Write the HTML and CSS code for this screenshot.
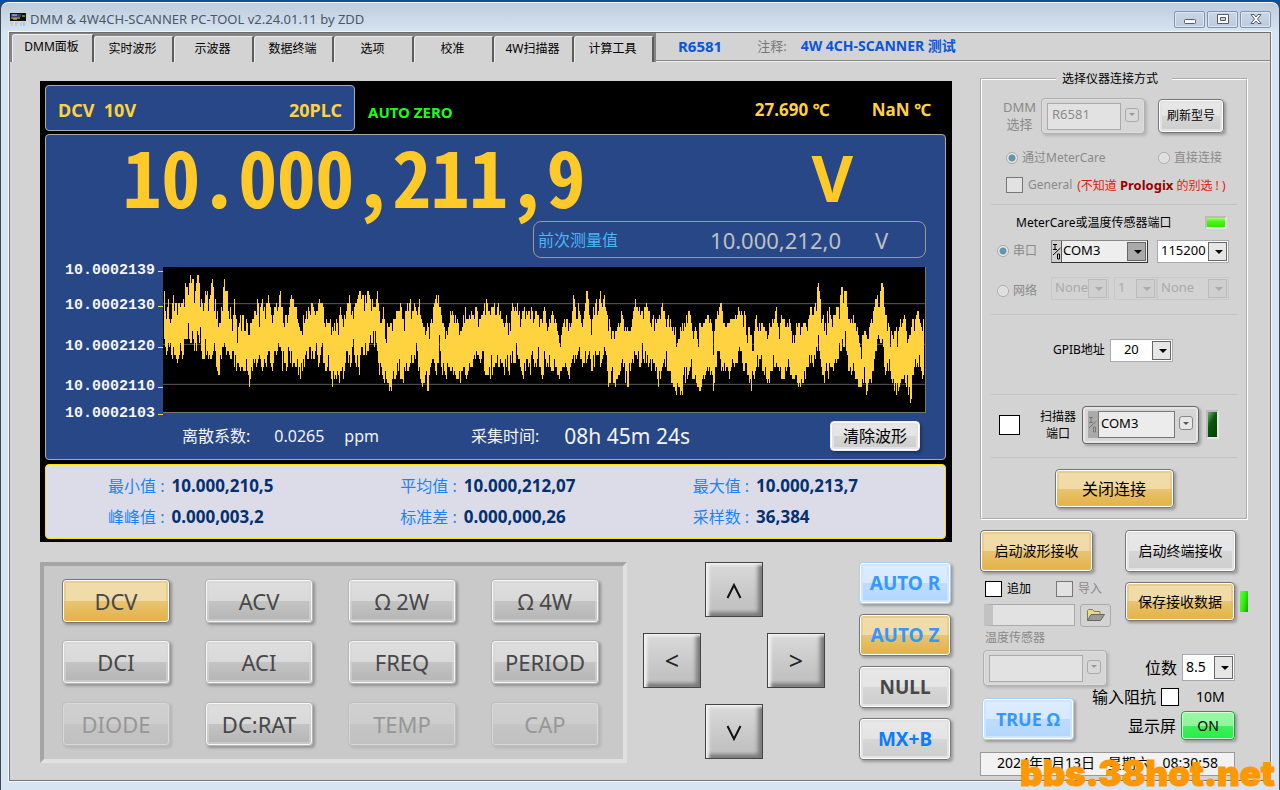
FILE: index.html
```html
<!DOCTYPE html>
<html lang="zh-CN">
  <head>
    <meta charset="UTF-8" />
    <meta name="viewport" content="width=device-width, initial-scale=1.0" />
    <title>DMM &amp; 4W4CH-SCANNER PC-TOOL</title>
    <link rel="stylesheet" href="styles.css">
  </head>
  <body>
    <div class="window">
      <header class="title-bar">
        <svg class="app-icon" width="16" height="13" viewBox="0 0 16 13" aria-hidden="true">
          <rect width="16" height="8" fill="#111" />
          <rect x="1" y="1" width="10" height="3" fill="#274787" />
          <path d="M1 5h9M12 3h3M3 6h4" stroke="#ffd23f" />
          <path d="M2 2h5" stroke="#cdd6ea" />
          <path d="M0 10h3M5 10h3M10 10h2M1 12h2M5 12h2M10 12h2" stroke="#b9b9b9" />
          <path d="M13 10h2" stroke="#f08a6a" />
          <path d="M13 12h2" stroke="#3fc8f0" />
        </svg>
        <h1 class="title">DMM &amp; 4W4CH-SCANNER PC-TOOL v2.24.01.11 by ZDD</h1>
        <div class="window-buttons">
          <button type="button" aria-label="Minimize">
            <svg width="12" height="12" viewBox="0 0 12 12"><rect x="0.5" y="6.5" width="11" height="4" rx="1" fill="#fff" stroke="#555b6b" /></svg>
          </button>
          <button type="button" aria-label="Maximize">
            <svg width="12" height="12" viewBox="0 0 12 12"><path d="M.5 1.5h11v9H.5z" fill="#fff" stroke="#555b6b" /><path d="M3.5 4.5h5v3h-5z" fill="#c6d3e3" stroke="#555b6b" /></svg>
          </button>
          <button type="button" aria-label="Close">
            <svg width="12" height="12" viewBox="0 0 12 12"><path d="M1 1.5h3L6 4l2-2.500h3L7.500 6l3.500 4.500H8L6 8l-2 2.500H1L4.500 6z" fill="#fff" stroke="#555b6b" /></svg>
          </button>
        </div>
      </header>

      <div class="client">
        <nav class="tab-bar">
          <div class="tabs">
            <button type="button" class="tab active">DMM面板</button>
            <button type="button" class="tab">实时波形</button>
            <button type="button" class="tab">示波器</button>
            <button type="button" class="tab">数据终端</button>
            <button type="button" class="tab">选项</button>
            <button type="button" class="tab">校准</button>
            <button type="button" class="tab">4W扫描器</button>
            <button type="button" class="tab">计算工具</button>
          </div>
          <div class="note">
            <span class="note-model">R6581</span>
            <span class="note-label">注释:</span>
            <span class="note-text">4W 4CH-SCANNER 测试</span>
          </div>
        </nav>

        <main class="content">
          <section class="left">
            <div class="screen">
              <div class="screen-top">
                <div class="range-box">
                  <span>DCV&nbsp; 10V</span>
                  <span>20PLC</span>
                </div>
                <span class="auto-zero">AUTO ZERO</span>
                <span class="temp">27.690 ℃</span>
                <span class="temp second">NaN ℃</span>
              </div>

              <div class="reading">
                <div class="main-value">
                  <span class="digits">10.000,211,9</span>
                  <span class="unit">V</span>
                </div>
                <div class="previous">
                  <span class="previous-label">前次测量值</span>
                  <span class="previous-value">10.000,212,0</span>
                  <span class="previous-unit">V</span>
                </div>
                <div class="chart">
                  <div class="axis">
                    <span>10.0002139</span>
                    <span>10.0002130</span>
                    <span>10.0002120</span>
                    <span>10.0002110</span>
                    <span>10.0002103</span>
                  </div>
                  <svg class="plot" viewBox="0 0 2289 435" preserveAspectRatio="none" role="img" aria-label="波形">
                    <path class="grid-line" d="M0 110H2289M0 232H2289M0 352H2289" />
                    <path id="trace" class="trace" />
                  </svg>
                </div>
                <div class="reading-foot">
                  <span>离散系数:</span>
                  <span class="spread">0.0265</span>
                  <span class="ppm">ppm</span>
                  <span class="time-label">采集时间:</span>
                  <span class="time">08h 45m 24s</span>
                  <button type="button" class="btn clear">清除波形</button>
                </div>
              </div>

              <dl class="stats">
                <div><dt>最小值 :</dt><dd>10.000,210,5</dd></div>
                <div><dt>平均值 :</dt><dd>10.000,212,07</dd></div>
                <div><dt>最大值 :</dt><dd>10.000,213,7</dd></div>
                <div><dt>峰峰值 :</dt><dd>0.000,003,2</dd></div>
                <div><dt>标准差 :</dt><dd>0.000,000,26</dd></div>
                <div><dt>采样数 :</dt><dd>36,384</dd></div>
              </dl>
            </div>

            <div class="controls">
              <div class="keypad">
                <button type="button" class="btn key gold">DCV</button>
                <button type="button" class="btn key">ACV</button>
                <button type="button" class="btn key">Ω 2W</button>
                <button type="button" class="btn key">Ω 4W</button>
                <button type="button" class="btn key">DCI</button>
                <button type="button" class="btn key">ACI</button>
                <button type="button" class="btn key">FREQ</button>
                <button type="button" class="btn key">PERIOD</button>
                <button type="button" class="btn key" disabled>DIODE</button>
                <button type="button" class="btn key">DC:RAT</button>
                <button type="button" class="btn key" disabled>TEMP</button>
                <button type="button" class="btn key" disabled>CAP</button>
              </div>
              <div class="arrows">
                <button type="button" class="arrow up" aria-label="Up"><svg width="16" height="16" viewBox="0 0 16 16"><path d="M1.500 15L8 2l6.500 13" /></svg></button>
                <button type="button" class="arrow left-key">&lt;</button>
                <button type="button" class="arrow right-key">&gt;</button>
                <button type="button" class="arrow down" aria-label="Down"><svg width="16" height="16" viewBox="0 0 16 16"><path d="M1.500 1L8 14l6.500-13" /></svg></button>
              </div>
              <div class="modes">
                <button type="button" class="btn mode blue">AUTO R</button>
                <button type="button" class="btn mode gold">AUTO Z</button>
                <button type="button" class="btn mode null">NULL</button>
                <button type="button" class="btn mode math">MX+B</button>
              </div>
            </div>
          </section>

          <aside class="side">
            <fieldset class="connection">
              <legend>选择仪器连接方式</legend>

              <div class="row model-row">
                <label class="two-line dim" for="model">DMM<br>选择</label>
                <div class="case off">
                  <select id="model" disabled><option>R6581</option></select>
                  <span class="case-arrow"></span>
                </div>
                <button type="button" class="btn refresh">刷新型号</button>
              </div>
              <div class="row radio-row">
                <label class="dim"><input type="radio" name="link" checked disabled>通过MeterCare</label>
                <label class="dim"><input type="radio" name="link" disabled>直接连接</label>
              </div>
              <div class="row general-row">
                <label class="dim"><input type="checkbox" disabled>General</label>
                <span class="warning">(不知道 <b>Prologix</b> 的别选 ! )</span>
              </div>

              <hr>
              <div class="row port-title">
                <span>MeterCare或温度传感器端口</span>
                <span class="led on"></span>
              </div>
              <div class="row serial-row">
                <label class="dim"><input type="radio" name="bus" checked disabled>串口</label>
                <div class="drop visa">
                  <svg class="io" width="9" height="17" viewBox="0 0 9 17" aria-hidden="true"><path d="M1 1.500h4M3 1.500v5M1 6.500h4M8.500 5L1 12M5.500 11h2v5h-2z" /></svg>
                  <select aria-label="串口"><option>COM3</option></select>
                </div>
                <div class="drop baud"><select aria-label="波特率"><option>115200</option></select></div>
              </div>
              <div class="row net-row">
                <label class="dim"><input type="radio" name="bus" disabled>网络</label>
                <div class="drop off host"><select aria-label="主机" disabled><option>None</option></select></div>
                <div class="drop off index"><select aria-label="序号" disabled><option>1</option></select></div>
                <div class="drop off device"><select aria-label="设备" disabled><option>None</option></select></div>
              </div>

              <hr>
              <div class="row gpib-row">
                <label for="gpib">GPIB地址</label>
                <div class="drop gpib"><select id="gpib"><option>20</option></select></div>
              </div>

              <hr>
              <div class="row scanner-row">
                <input type="checkbox" class="big" aria-label="启用扫描器">
                <label class="two-line" for="scanner">扫描器<br>端口</label>
                <div class="case">
                  <span class="io-cell">
                    <svg class="io" width="9" height="17" viewBox="0 0 9 17" aria-hidden="true"><path d="M1 1.500h4M3 1.500v5M1 6.500h4M8.500 5L1 12M5.500 11h2v5h-2z" /></svg>
                  </span>
                  <select id="scanner"><option>COM3</option></select>
                  <span class="case-arrow"></span>
                </div>
                <span class="led dark"></span>
              </div>

              <hr>
              <button type="button" class="btn gold disconnect">关闭连接</button>
            </fieldset>

            <div class="actions">
              <div class="actions-left">
                <button type="button" class="btn gold start">启动波形接收</button>
                <div class="row checks">
                  <label><input type="checkbox">追加</label>
                  <label class="dim"><input type="checkbox" disabled>导入</label>
                </div>
                <div class="row file-row">
                  <input type="text" class="path" aria-label="文件路径" disabled>
                  <button type="button" class="browse" aria-label="浏览" disabled>
                    <svg width="20" height="14" viewBox="0 0 20 14">
                      <path d="M1.500 12.500V2.500l1-1h4l1.500 2h6v3" fill="#e6dc8c" stroke="#83804d" />
                      <path d="M1.500 12.500L5 6.500h13.500l-4 6z" fill="#9a9a9a" stroke="#666" />
                    </svg>
                  </button>
                </div>
                <label class="dim sensor-label" for="sensor">温度传感器</label>
                <div class="case off sensor">
                  <select id="sensor" disabled><option></option></select>
                  <span class="case-arrow"></span>
                </div>
                <button type="button" class="btn blue true-ohm">TRUE Ω</button>
              </div>
              <div class="actions-right">
                <button type="button" class="btn start">启动终端接收</button>
                <div class="row save-row">
                  <button type="button" class="btn gold save">保存接收数据</button>
                  <span class="led slim"></span>
                </div>
                <div class="row setting">
                  <label for="digits">位数</label>
                  <div class="drop digits-drop"><select id="digits"><option>8.5</option></select></div>
                </div>
                <div class="row setting">
                  <label for="impedance">输入阻抗</label>
                  <input type="checkbox" id="impedance">
                  <span class="impedance-value">10M</span>
                </div>
                <div class="row setting">
                  <span>显示屏</span>
                  <button type="button" class="btn green">ON</button>
                </div>
              </div>
            </div>

            <div class="clock">
              <span>2024年7月13日</span>
              <span>星期六</span>
              <span>08:30:58</span>
            </div>
          </aside>
        </main>
      </div>
      <div class="watermark">bbs.38hot.net</div>
    </div>

    <script src="script.js"></script>
  </body>
</html>
```

FILE: styles.css
```css
* {
  box-sizing: border-box;
}
body {
  margin: 0;
  padding-top: 1px;
  background-color: #0b50a0;
  font-family: "Noto Sans", "Noto Sans CJK SC", sans-serif;
  font-size: 12px;
  line-height: 16px;
  color: #000;
}
button,
input,
select {
  margin: 0;
  font: inherit;
  color: inherit;
}
.window {
  position: relative;
  min-height: calc(100vh - 1px);
  padding: 0 8px 7px;
  border: 1px solid #3b4656;
  border-bottom: none;
  border-radius: 8px 8px 0 0;
  background: linear-gradient(#bccbdb, #d7e4f2 30px);
  box-shadow: inset 0 1px #f3f8fc;
}

/* title bar */
.title-bar {
  display: flex;
  align-items: center;
  height: 30px;
  padding: 4px 0 0 1px;
}
.app-icon {
  margin-right: 4px;
}
.title {
  flex: 1;
  margin: 0;
  font-size: 13px;
  font-weight: normal;
  color: #4b5866;
}
.window-buttons {
  display: flex;
  gap: 2px;
}
.window-buttons button {
  display: flex;
  align-items: center;
  justify-content: center;
  width: 31px;
  height: 17px;
  padding: 0;
  border: 1px solid #8293ab;
  border-radius: 2px;
  background: linear-gradient(#c9d6e5, #bccbdc);
  box-shadow: inset 0 0 0 1px #dfe8f2;
}

.client {
  border: 1px solid #777;
  border-top-color: #6c6c6c;
  background-color: #d3d3d3;
  box-shadow: 0 0 0 1px #f4f7fa;
}

/* tabs */
.tab-bar {
  display: flex;
  height: 29px;
  background-color: #858585;
}
.tabs {
  display: flex;
  align-items: flex-end;
  padding-left: 2px;
}
.tab {
  width: 80px;
  height: 26px;
  padding: 0 2px 2px 0;
  border: 1px solid #eee;
  border-right: 2px solid #5c5c5c;
  border-bottom: none;
  border-radius: 3px 0 0 0;
  background-color: #d3d3d3;
}
.tab.active {
  width: 82px;
  height: 28px;
  padding-bottom: 4px;
}
.note {
  display: flex;
  flex: 1;
  align-items: center;
  margin-left: 2px;
  padding: 0 0 2px 22px;
  border-bottom: 1px solid #f0f0f0;
  background-color: #d3d3d3;
  box-shadow: inset 0 -1px #858585;
  font-size: 14px;
  font-weight: bold;
  color: #0a55dc;
}
.note-model {
  margin-right: 35px;
  font-size: 15px;
}
.note-label {
  margin-right: 14px;
  font-size: 13px;
  font-weight: normal;
  color: #777;
}

.content {
  display: flex;
  gap: 28px;
  padding: 19px 22px 4px 30px;
}
.left {
  flex: 1;
  min-width: 0;
}
.side {
  width: 268px;
}

/* meter screen */
.screen {
  padding: 4px 6px 3px 5px;
  background-color: #000;
}
.screen-top {
  display: flex;
  align-items: center;
  height: 46px;
  margin-bottom: 3px;
  font-size: 17px;
  font-weight: bold;
  color: #ffd23f;
}
.range-box {
  display: flex;
  align-items: center;
  justify-content: space-between;
  width: 310px;
  height: 46px;
  padding: 4px 12px 0;
  border: 1px solid #aaa;
  border-radius: 4px;
  background-color: #274787;
  font-size: 18px;
}
.auto-zero {
  flex: 1;
  padding: 7px 0 0 13px;
  font-size: 15px;
  color: #1aff1a;
}
.temp {
  padding-top: 4px;
}
.temp.second {
  margin: 0 15px 0 42px;
}
.reading {
  padding: 0 19px;
  border: 1px solid #aaa;
  border-radius: 4px;
  background-color: #274787;
  color: #f4f4f4;
}
.main-value {
  display: flex;
  justify-content: space-between;
  height: 86px;
  padding: 0 73px 0 58px;
  font-weight: bold;
  color: #ffca28;
}
.digits {
  font-family: "Noto Sans CJK SC", sans-serif;
  font-size: 77px;
  font-feature-settings: "hwid";
  line-height: 79px;
}
.unit {
  font-size: 64px;
  line-height: 86px;
}
.previous {
  display: flex;
  align-items: center;
  width: 393px;
  height: 37px;
  margin-left: auto;
  padding-left: 4px;
  border: 1px solid #9a9a9a;
  border-radius: 8px;
  font-size: 22px;
  color: #bfc0c4;
}
.previous-label {
  flex: 1;
  font-size: 16px;
  color: #4db4f5;
}
.previous-unit {
  width: 50px;
  margin-left: 34px;
}
.chart {
  display: flex;
  margin-top: 9px;
}
.axis {
  display: grid;
  grid-template-rows: 35px 41px 40px 27px 18px;
  align-items: start;
  width: 98px;
  margin: -5px 0 -10px;
  font-family: "Liberation Mono", monospace;
  font-size: 15px;
  font-weight: bold;
  line-height: 18px;
}
.axis span {
  display: flex;
  align-items: center;
}
.axis span::after {
  content: "";
  width: 5px;
  height: 1px;
  margin-left: 3px;
  background-color: #ffd23f;
}
.plot {
  flex: 1;
  min-width: 0;
  height: 146px;
  border-right: 1px solid #777;
  border-bottom: 1px solid #777;
  background-color: #000;
}
.grid-line {
  stroke: #5c5c5c;
  stroke-width: 3;
}
.trace {
  fill: #ffd23f;
  shape-rendering: crispEdges;
}
.reading-foot {
  display: flex;
  align-items: center;
  height: 46px;
  padding: 0 6px 0 117px;
  font-size: 16px;
}
.spread {
  margin-left: 24px;
}
.ppm {
  margin-left: 20px;
}
.time-label {
  margin-left: 92px;
}
.time {
  margin-left: 25px;
  font-size: 21px;
}
.stats {
  display: grid;
  grid-template-columns: repeat(3, 1fr);
  align-items: center;
  height: 75px;
  margin: 4px 0 0;
  padding: 5px 0 5px 22px;
  border: 1px solid #ffe100;
  border-radius: 4px;
  background-color: #dcdce8;
  font-size: 16px;
}
.stats div {
  display: flex;
  gap: 7px;
  padding-left: 40px;
}
.stats dt {
  color: #1a84f5;
}
.stats dd {
  margin: 0;
  font-size: 17px;
  font-weight: bold;
  color: #04306f;
}

/* buttons */
.btn {
  padding: 0;
  border: 1px solid #777;
  border-radius: 4px;
  background: linear-gradient(#e8e8e8, #e4e4e4 50%, #d6d6d6 50%, #cdcdcd);
  box-shadow: inset 0 0 0 1px #fdfdfd, inset 0 0 0 3px #e2e2e2, 2px 2px 3px rgba(0, 0, 0, 0.28);
  white-space: nowrap;
}
.btn.gold {
  background: linear-gradient(#f0dbaa, #f0dba8 50%, #e8c473 50%, #e4b142);
  box-shadow: inset 0 0 0 1px #fff, inset 0 0 0 3px rgba(226, 186, 98, 0.4), 2px 2px 3px rgba(0, 0, 0, 0.28);
}
.btn.blue {
  border-color: #a9cffb;
  background: linear-gradient(#deedff, #d8e9ff 50%, #bfdcff 50%, #b2d6ff);
  box-shadow: inset 0 0 0 1px #fff, inset 0 0 0 3px #cfe4ff, 2px 2px 3px rgba(0, 0, 0, 0.28);
  color: #3498ff;
}
.btn.green {
  width: 54px;
  height: 29px;
  border-color: #0cad3a;
  background: linear-gradient(#9af7a4, #8ff59a 50%, #3ff05a 50%, #25ee48);
  box-shadow: inset 0 0 0 1px #d6ffdc, 2px 2px 3px rgba(0, 0, 0, 0.28);
  font-size: 14px;
}
.clear {
  width: 90px;
  height: 30px;
  margin-left: auto;
  border-color: #eee;
  font-size: 16px;
  color: #000;
}

.controls {
  display: flex;
  align-items: flex-start;
  margin-top: 20px;
}
.keypad {
  display: grid;
  grid-template-columns: repeat(4, 108px);
  gap: 17px 35px;
  height: 201px;
  padding: 13px 24px 13px 18px;
  border: 4px solid;
  border-color: #a5a5a5 #e0e0e0 #e0e0e0 #a5a5a5;
  background-color: #c9c9c9;
}
.key {
  height: 44px;
  border-color: #b5b5b5;
  background: linear-gradient(#dedede, #d9d9d9 50%, #c4c4c4 50%, #b4b4b4);
  box-shadow: inset 0 0 0 1px #f8f8f8, inset 0 0 0 3px rgba(214, 214, 214, 0.6), 2px 2px 3px rgba(0, 0, 0, 0.28);
  font-size: 22px;
  line-height: 30px;
  color: #484848;
}
.key.gold {
  border-color: #777;
}
.key:disabled {
  border-color: #bdbdbd;
  background: linear-gradient(#cfcfcf, #cdcdcd 50%, #c5c5c5 50%, #c0c0c0);
  box-shadow: inset 0 0 0 1px #d9d9d9, 2px 2px 3px rgba(0, 0, 0, 0.1);
  color: #979797;
}
.arrows {
  display: grid;
  grid-template-columns: repeat(3, 58px);
  grid-template-rows: repeat(3, 55px);
  gap: 16px 4px;
  margin: 0 auto 0 16px;
}
.arrow {
  padding: 0;
  border: 1px solid #444;
  background: linear-gradient(#dadada, #c2c2c2 80%, #cfcfcf);
  box-shadow: inset 3px 2px 3px #f2f2f2, inset -4px -4px 4px #777;
  font-size: 25px;
  line-height: 25px;
  color: #222;
}
.arrow path {
  fill: none;
  stroke: #111;
  stroke-width: 2;
}
.arrow.up {
  grid-area: 1 / 2;
}
.left-key {
  grid-area: 2 / 1;
}
.right-key {
  grid-area: 2 / 3;
}
.arrow.down {
  grid-area: 3 / 2;
}
.modes {
  display: flex;
  flex-direction: column;
  gap: 10px;
  margin-right: 1px;
}
.mode {
  width: 92px;
  height: 42px;
  font-size: 19px;
  font-weight: bold;
}
.mode.gold {
  color: #3498ff;
}
.mode.null {
  color: #484848;
}
.mode.math {
  color: #0a7cff;
}

/* connection group */
.connection {
  min-width: 0;
  margin: -10px 0 0;
  padding: 10px 7px;
  border: 2px groove #fff;
}
.connection legend {
  margin: 0 auto;
  padding: 0 14px 0 6px;
}
.row {
  display: flex;
  align-items: center;
}
.row label {
  display: flex;
  align-items: center;
}
.dim {
  color: #8a8a8a;
}
.two-line {
  justify-content: center;
  text-align: center;
  line-height: 17px;
}
hr {
  height: 1px;
  margin: 0 2px;
  border: none;
  background-color: #c3c3c3;
}
.model-row {
  height: 38px;
  padding-left: 14px;
}
.model-row .two-line {
  width: 33px;
  font-size: 13px;
}
.refresh {
  width: 66px;
  height: 34px;
  margin-left: 13px;
}
.radio-row {
  justify-content: space-between;
  height: 46px;
  padding: 0 17px;
}
.general-row {
  gap: 5px;
  height: 8px;
  margin-bottom: 15px;
  padding-left: 17px;
}
.warning {
  color: #e01a0c;
  white-space: nowrap;
}
.warning b {
  font-size: 13px;
  color: #970000;
}
input[type="radio"] {
  appearance: none;
  width: 12px;
  height: 12px;
  margin-right: 4px;
  border: 1px solid #aaa;
  border-radius: 50%;
  background-color: #dedede;
  box-shadow: inset 0 0 0 1px #eee;
}
input[type="radio"]:checked {
  background: radial-gradient(#6495ad 3px, #dedede 4px);
}
input[type="checkbox"] {
  appearance: none;
  flex-shrink: 0;
  width: 17px;
  height: 16px;
  margin-right: 5px;
  border: 1px solid #000;
  background-color: #fff;
}
input[type="checkbox"]:disabled {
  border-color: #777;
  background-color: #e2e2e2;
}
input[type="checkbox"].big {
  width: 21px;
  height: 20px;
  margin-right: 18px;
}
.case {
  display: flex;
  align-items: center;
  width: 104px;
  height: 36px;
  margin-left: 5px;
  padding: 0 5px;
  border: 1px solid #666;
  border-radius: 4px;
  background-color: #d6d6d6;
  box-shadow: inset 0 0 0 2px #e6e6e6, 2px 2px 3px rgba(0, 0, 0, 0.25);
}
.case.off {
  border-color: #b0b0b0;
  box-shadow: inset 0 0 0 1px #dedede, 2px 2px 3px rgba(0, 0, 0, 0.15);
  color: #8a8a8a;
}
.case select {
  appearance: none;
  flex: 1;
  min-width: 0;
  height: 27px;
  padding: 0 4px 4px;
  border: 1px solid #777;
  border-radius: 0;
  background-color: #ececec;
  font-size: 13px;
}
.case.off select {
  border-color: #aaa;
  background-color: #e2e2e2;
  opacity: 1;
}
.case-arrow {
  display: flex;
  align-items: center;
  justify-content: center;
  width: 14px;
  height: 14px;
  margin: 0 0 3px 4px;
  border: 1px solid #888;
  border-radius: 3px;
  background-color: #e6e6e6;
}
.case-arrow::before,
.drop::after {
  content: "";
  border: 3px solid transparent;
  border-top-color: #555;
  border-bottom: none;
}
.case.off .case-arrow {
  border-color: #aaa;
  background-color: #d8d8d8;
}
.case.off .case-arrow::before {
  border-top-color: #999;
}
.io {
  flex-shrink: 0;
  fill: none;
  stroke: #000;
}
.io-cell {
  display: flex;
  align-items: center;
  width: 10px;
  height: 27px;
  background-color: #aaa;
}
.io-cell .io {
  stroke: #777;
}
.case .io-cell + select {
  padding-left: 2px;
}

/* drop-downs */
.drop {
  position: relative;
  display: flex;
  align-items: center;
  height: 23px;
  border: 1px solid #a9a9b2;
  background-color: #fff;
  font-size: 13px;
}
.drop select {
  appearance: none;
  width: 100%;
  height: 100%;
  padding: 0 18px 2px 3px;
  border: none;
  border-radius: 0;
  background: none;
}
.drop::before {
  content: "";
  position: absolute;
  top: 1px;
  right: 1px;
  bottom: 1px;
  width: 17px;
  border: 1px solid #666;
  background-color: #e6e6e6;
  pointer-events: none;
}
.drop::after {
  position: absolute;
  top: 9px;
  right: 5px;
  border-width: 4px 4px 0;
  border-top-color: #000;
  pointer-events: none;
}
.drop.off {
  border-color: #c8c8c8;
  background: none;
  color: #aaa;
}
.drop.off select {
  opacity: 1;
}
.drop.off::before {
  border-color: #bbb;
  background-color: #cfcfcf;
}
.drop.off::after {
  border-top-color: #aaa;
}
.led {
  width: 22px;
  height: 13px;
  border: 2px solid;
  border-color: #bbb #e6e6e6 #e6e6e6 #bbb;
}
.led.on {
  background: linear-gradient(#a0ff70, #48fa05 40%, #3fe000);
}
.led.dark {
  width: 13px;
  height: 29px;
  margin-left: 7px;
  background: linear-gradient(120deg, #6fae6f, #085a0b 40%, #043f06);
}
.led.slim {
  width: 8px;
  height: 21px;
  margin-left: 5px;
  border: none;
  background: linear-gradient(100deg, #5eff3c, #32ee0a 50%, #16a800);
}
.port-title {
  justify-content: space-between;
  height: 35px;
  padding: 0 12px 0 27px;
}
.serial-row,
.net-row {
  height: 22px;
  padding-left: 8px;
}
.net-row {
  margin: 15px 0;
}
.serial-row label,
.net-row label {
  width: 54px;
}
.net-row label {
  padding-top: 6px;
}
.visa {
  width: 97px;
  border: 1px solid;
  border-color: #888 #333 #333 #888;
  background-color: #d0d0d0;
}
.visa select {
  padding-left: 1px;
  border-left: 1px solid #555;
  background-color: #eee;
}
.visa::before {
  background-color: #aaa;
}
.baud {
  width: 72px;
  margin-left: 9px;
}
.host {
  width: 58px;
}
.index {
  width: 43px;
  margin-left: 5px;
}
.device {
  width: 72px;
}
.gpib-row {
  gap: 5px;
  height: 79px;
  padding: 0 0 9px 64px;
}
.gpib {
  width: 63px;
}
.gpib select {
  padding-left: 13px;
}
.scanner-row {
  height: 62px;
  padding: 0 0 3px 10px;
}
.scanner-row .two-line {
  width: 40px;
}
.scanner-row .case {
  width: 117px;
  height: 38px;
  margin-left: 4px;
}
.disconnect {
  display: block;
  width: 119px;
  height: 39px;
  margin: 11px auto 0;
  font-size: 16px;
}

/* lower right */
.actions {
  display: flex;
  justify-content: space-between;
  margin-top: 10px;
}
.actions-left {
  width: 131px;
}
.actions-right {
  width: 123px;
}
.start {
  width: 111px;
  height: 42px;
  font-size: 14px;
}
.actions-left .start {
  width: 113px;
}
.checks {
  gap: 25px;
  height: 34px;
  padding-left: 5px;
}
.file-row {
  gap: 5px;
  height: 18px;
  padding-left: 4px;
}
.path {
  width: 91px;
  height: 22px;
  border: 1px solid #aaa;
  border-left: 9px solid #c2c2c2;
  background-color: #e2e2e2;
}
.browse {
  display: flex;
  align-items: center;
  justify-content: center;
  width: 31px;
  height: 23px;
  padding: 0;
  border: 1px solid #aaa;
  border-radius: 3px;
  background-color: #d3d3d3;
}
.sensor-label {
  display: block;
  margin: 6px 0 4px 5px;
}
.sensor {
  width: 124px;
  margin-left: 3px;
}
.true-ohm {
  width: 92px;
  height: 42px;
  margin: 12px 0 0 2px;
  font-size: 18px;
  font-weight: bold;
}
.save-row {
  height: 39px;
  margin: 10px 0 32px;
}
.save {
  width: 111px;
  height: 39px;
  font-size: 14px;
}
.setting {
  justify-content: flex-end;
  gap: 5px;
  height: 29px;
  padding-right: 13px;
  font-size: 16px;
  white-space: nowrap;
}
.digits-drop {
  width: 53px;
  height: 27px;
  font-size: 14px;
}
.digits-drop::after {
  top: 11px;
}
.setting input[type="checkbox"] {
  width: 18px;
  height: 18px;
  margin-right: 0;
}
.impedance-value {
  flex-shrink: 0;
  width: 51px;
  padding-left: 12px;
  font-size: 14px;
}
.clock {
  display: flex;
  justify-content: space-between;
  width: 255px;
  margin-top: 12px;
  padding: 0 16px 2px;
  border: 1px solid #999;
  background-color: #f2f2f2;
  font-size: 14px;
  line-height: 20px;
}
.watermark {
  position: absolute;
  right: 4px;
  bottom: 0;
  font-family: "Inter", sans-serif;
  font-size: 35px;
  font-weight: 900;
  line-height: 34px;
  color: #ff9800;
  -webkit-text-stroke: 1px #ff9800;
}
```

FILE: script.js
```js
// Peak points of the recorded trace as x,y pairs, in plot units.
// Each half has its own x origin.
const halves = [
  {
    x: -369,
    upper: "372,120 378,170 384,145 390,165 398,120 404,135 412,155 420,135 430,132 435,95 446,75 458,60 463,120 472,60 480,110 490,150 498,95 506,145 517,60 522,120 530,170 538,212 545,130 552,85 560,115 570,160 577,205 583,120 590,225 600,180 612,190 622,205 630,215 640,180 650,135 657,170 665,145 675,155 684,120 694,200 703,155 712,130 720,108 728,180 740,180 753,120 762,160 775,180 784,240 790,170 798,180 806,132 815,155 825,175 835,132 845,145 855,190 862,215 868,180 875,225 888,200 893,225 899,155 905,205 915,165 928,110 935,180 945,155 958,110 965,110 972,145 982,108 990,132 1000,130 1012,120 1018,180 1030,170 1036,225 1045,205 1055,215 1065,190 1080,145 1088,200 1098,165 1108,132 1115,170 1123,145 1130,190 1137,145 1145,200 1155,228 1163,205 1175,180 1182,145 1193,120 1200,155 1210,205 1222,240 1232,155 1240,180 1250,190 1260,225 1270,155 1285,160 1298,190 1305,155 1315,190 1325,180 1337,132 1345,180 1358,155 1375,145",
    lower: "372,242 378,315 385,270 395,300 405,295 412,328 420,290 428,315 433,232 440,255 447,242 452,270 458,232 462,282 468,282 473,230 480,270 490,328 500,290 510,325 518,280 525,315 536,365 545,280 552,268 560,290 570,320 580,345 592,352 605,340 618,340 626,390 635,340 645,345 655,300 665,345 675,350 685,270 694,352 705,300 712,315 718,282 725,345 730,315 737,352 745,300 755,325 765,330 782,375 790,330 800,320 808,280 815,330 825,300 833,340 840,290 850,315 862,365 868,350 875,390 885,355 893,400 900,345 908,365 920,320 930,330 940,300 950,330 956,365 962,268 970,290 980,290 990,265 998,255 1003,262 1010,268 1018,365 1025,350 1037,390 1043,400 1052,400 1060,365 1075,355 1087,388 1095,352 1108,340 1118,352 1128,300 1135,350 1142,375 1150,412 1156,370 1162,400 1170,370 1180,325 1188,345 1198,290 1205,345 1214,375 1222,345 1232,340 1245,365 1258,390 1268,330 1278,375 1287,320 1297,345 1308,295 1318,340 1330,330 1340,362 1355,365 1365,315 1378,330",
  },
  {
    x: 1011,
    upper: "0,170 8,205 18,190 27,205 35,145 45,165 52,155 62,200 70,155 80,180 90,165 105,170 120,205 136,155 145,185 160,165 170,205 182,258 190,210 200,185 210,205 222,120 230,155 236,145 248,205 256,165 264,95 270,180 278,200 286,132 294,140 301,108 308,140 317,120 325,190 335,215 346,250 355,210 364,165 375,205 390,225 400,185 408,145 420,165 430,165 445,155 460,190 475,205 488,155 500,190 510,185 520,240 527,205 533,278 545,205 555,210 568,170 580,205 595,240 605,190 615,215 625,165 637,205 642,278 650,170 665,145 675,210 690,205 705,180 722,145 733,165 742,215 755,230 762,260 770,180 780,205 795,210 810,205 822,205 832,155 840,250 847,165 860,200 872,205 880,250 892,205 905,225 920,205 935,145 940,190 947,132 958,95 965,155 975,200 990,155 1000,190 1010,165 1020,160 1027,95 1034,125 1042,108 1048,200 1058,180 1070,200 1083,278 1093,230 1105,240 1115,200 1128,135 1137,135 1142,108 1150,72 1156,180 1165,190 1178,240 1195,225 1213,180 1228,250 1240,200 1250,190 1256,165 1262,200 1278,190",
    lower: "0,315 10,350 25,350 40,345 50,282 60,330 68,362 78,325 90,345 105,330 115,330 125,365 137,325 150,330 165,345 182,370 192,375 200,330 210,375 218,305 230,325 240,320 252,345 262,305 275,345 288,330 295,282 303,325 313,295 320,300 326,388 335,365 345,400 355,365 367,345 375,370 388,388 400,340 413,295 420,325 432,310 445,325 458,345 470,345 478,388 487,340 500,330 510,345 517,388 525,390 530,425 537,388 545,450 552,388 562,375 570,350 580,375 590,365 601,412 612,370 625,340 637,355 642,400 650,345 658,282 665,345 680,335 690,365 700,330 712,320 722,295 730,330 745,365 755,400 762,370 775,330 790,350 808,388 820,330 835,330 850,375 862,345 880,365 890,355 900,400 912,375 925,340 935,315 945,330 958,270 965,330 972,375 985,370 995,320 1005,345 1020,320 1030,268 1038,268 1045,320 1052,370 1062,345 1072,370 1080,410 1090,380 1097,365 1102,438 1108,375 1118,375 1128,300 1136,258 1142,268 1150,262 1156,350 1170,345 1182,400 1195,412 1205,370 1215,360 1222,400 1234,450 1240,365 1252,345 1262,330 1270,370 1278,340",
  },
];

const STEP = 3;
const LEVEL = 12;
const Y_ORIGIN = 36;

function readPoints(side) {
  return halves.flatMap((half) =>
    half[side].split(" ").map((pair) => {
      const [x, y] = pair.split(",").map(Number);
      return [x + half.x, y - Y_ORIGIN];
    })
  );
}

function valueAt(points, x) {
  const i = Math.max(1, points.findIndex((p) => p[0] >= x));
  const [x0, y0] = points[i - 1];
  const [x1, y1] = points[i];
  return y0 + ((y1 - y0) * (x - x0)) / (x1 - x0);
}

let seed = 7;
function noise() {
  seed = (seed * 16807) % 2147483647;
  return seed / 2147483647;
}

const snap = (y) => Math.round(y / LEVEL) * LEVEL;

const upperEdge = readPoints("upper");
const lowerEdge = readPoints("lower");

// one closed staircase: along the upper edge, back along the lower one
let there = "";
let back = "";
for (let x = 3; x <= 2284; x += STEP) {
  const y0 = snap(valueAt(upperEdge, x) - 10 + noise() * noise() * 70);
  const y1 = snap(valueAt(lowerEdge, x) + 10 - noise() * noise() * 70);
  there += `L${x} ${y0}H${x + STEP}`;
  back = `L${x + STEP} ${y1}H${x}` + back;
}
document.getElementById("trace").setAttribute("d", "M" + there.slice(1) + back + "Z");
```
